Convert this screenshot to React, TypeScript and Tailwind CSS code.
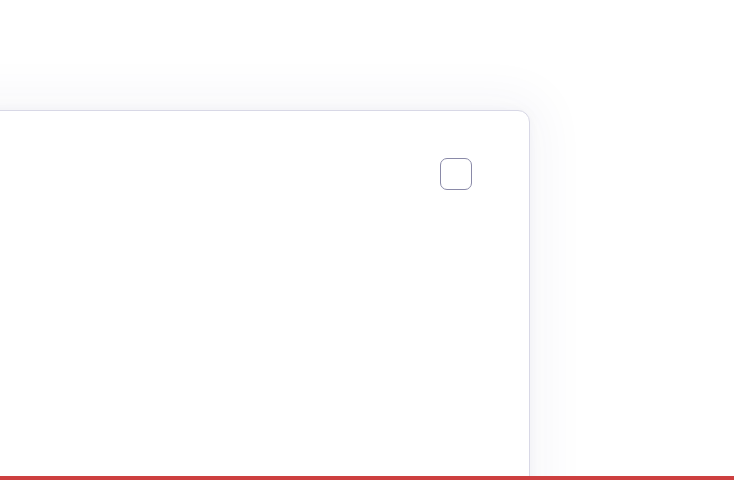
export default function App() {
  return (
    <div className="flex h-[480px] w-[734px] flex-col overflow-hidden bg-white" style={{ fontFamily: '"Liberation Sans", sans-serif' }}>
      <div className="flex flex-1 flex-col overflow-hidden pt-[110px]">
        <div className="-ml-[40px] flex h-[420px] w-[570px] shrink-0 justify-end rounded-tr-xl border border-[#d8d8e6] bg-white pr-[57px] pt-[47px] shadow-[0_0_50px_14px_rgba(40,40,110,0.045),0_0_12px_rgba(40,40,110,0.04)]">
          <button
            type="button"
            aria-label="checkbox"
            className="h-8 w-8 rounded-[7px] border border-[#8a8aa8] bg-white"
          />
        </div>
      </div>
      <div className="h-1 w-full shrink-0 bg-[#cd3f3f]" />
    </div>
  );
}
